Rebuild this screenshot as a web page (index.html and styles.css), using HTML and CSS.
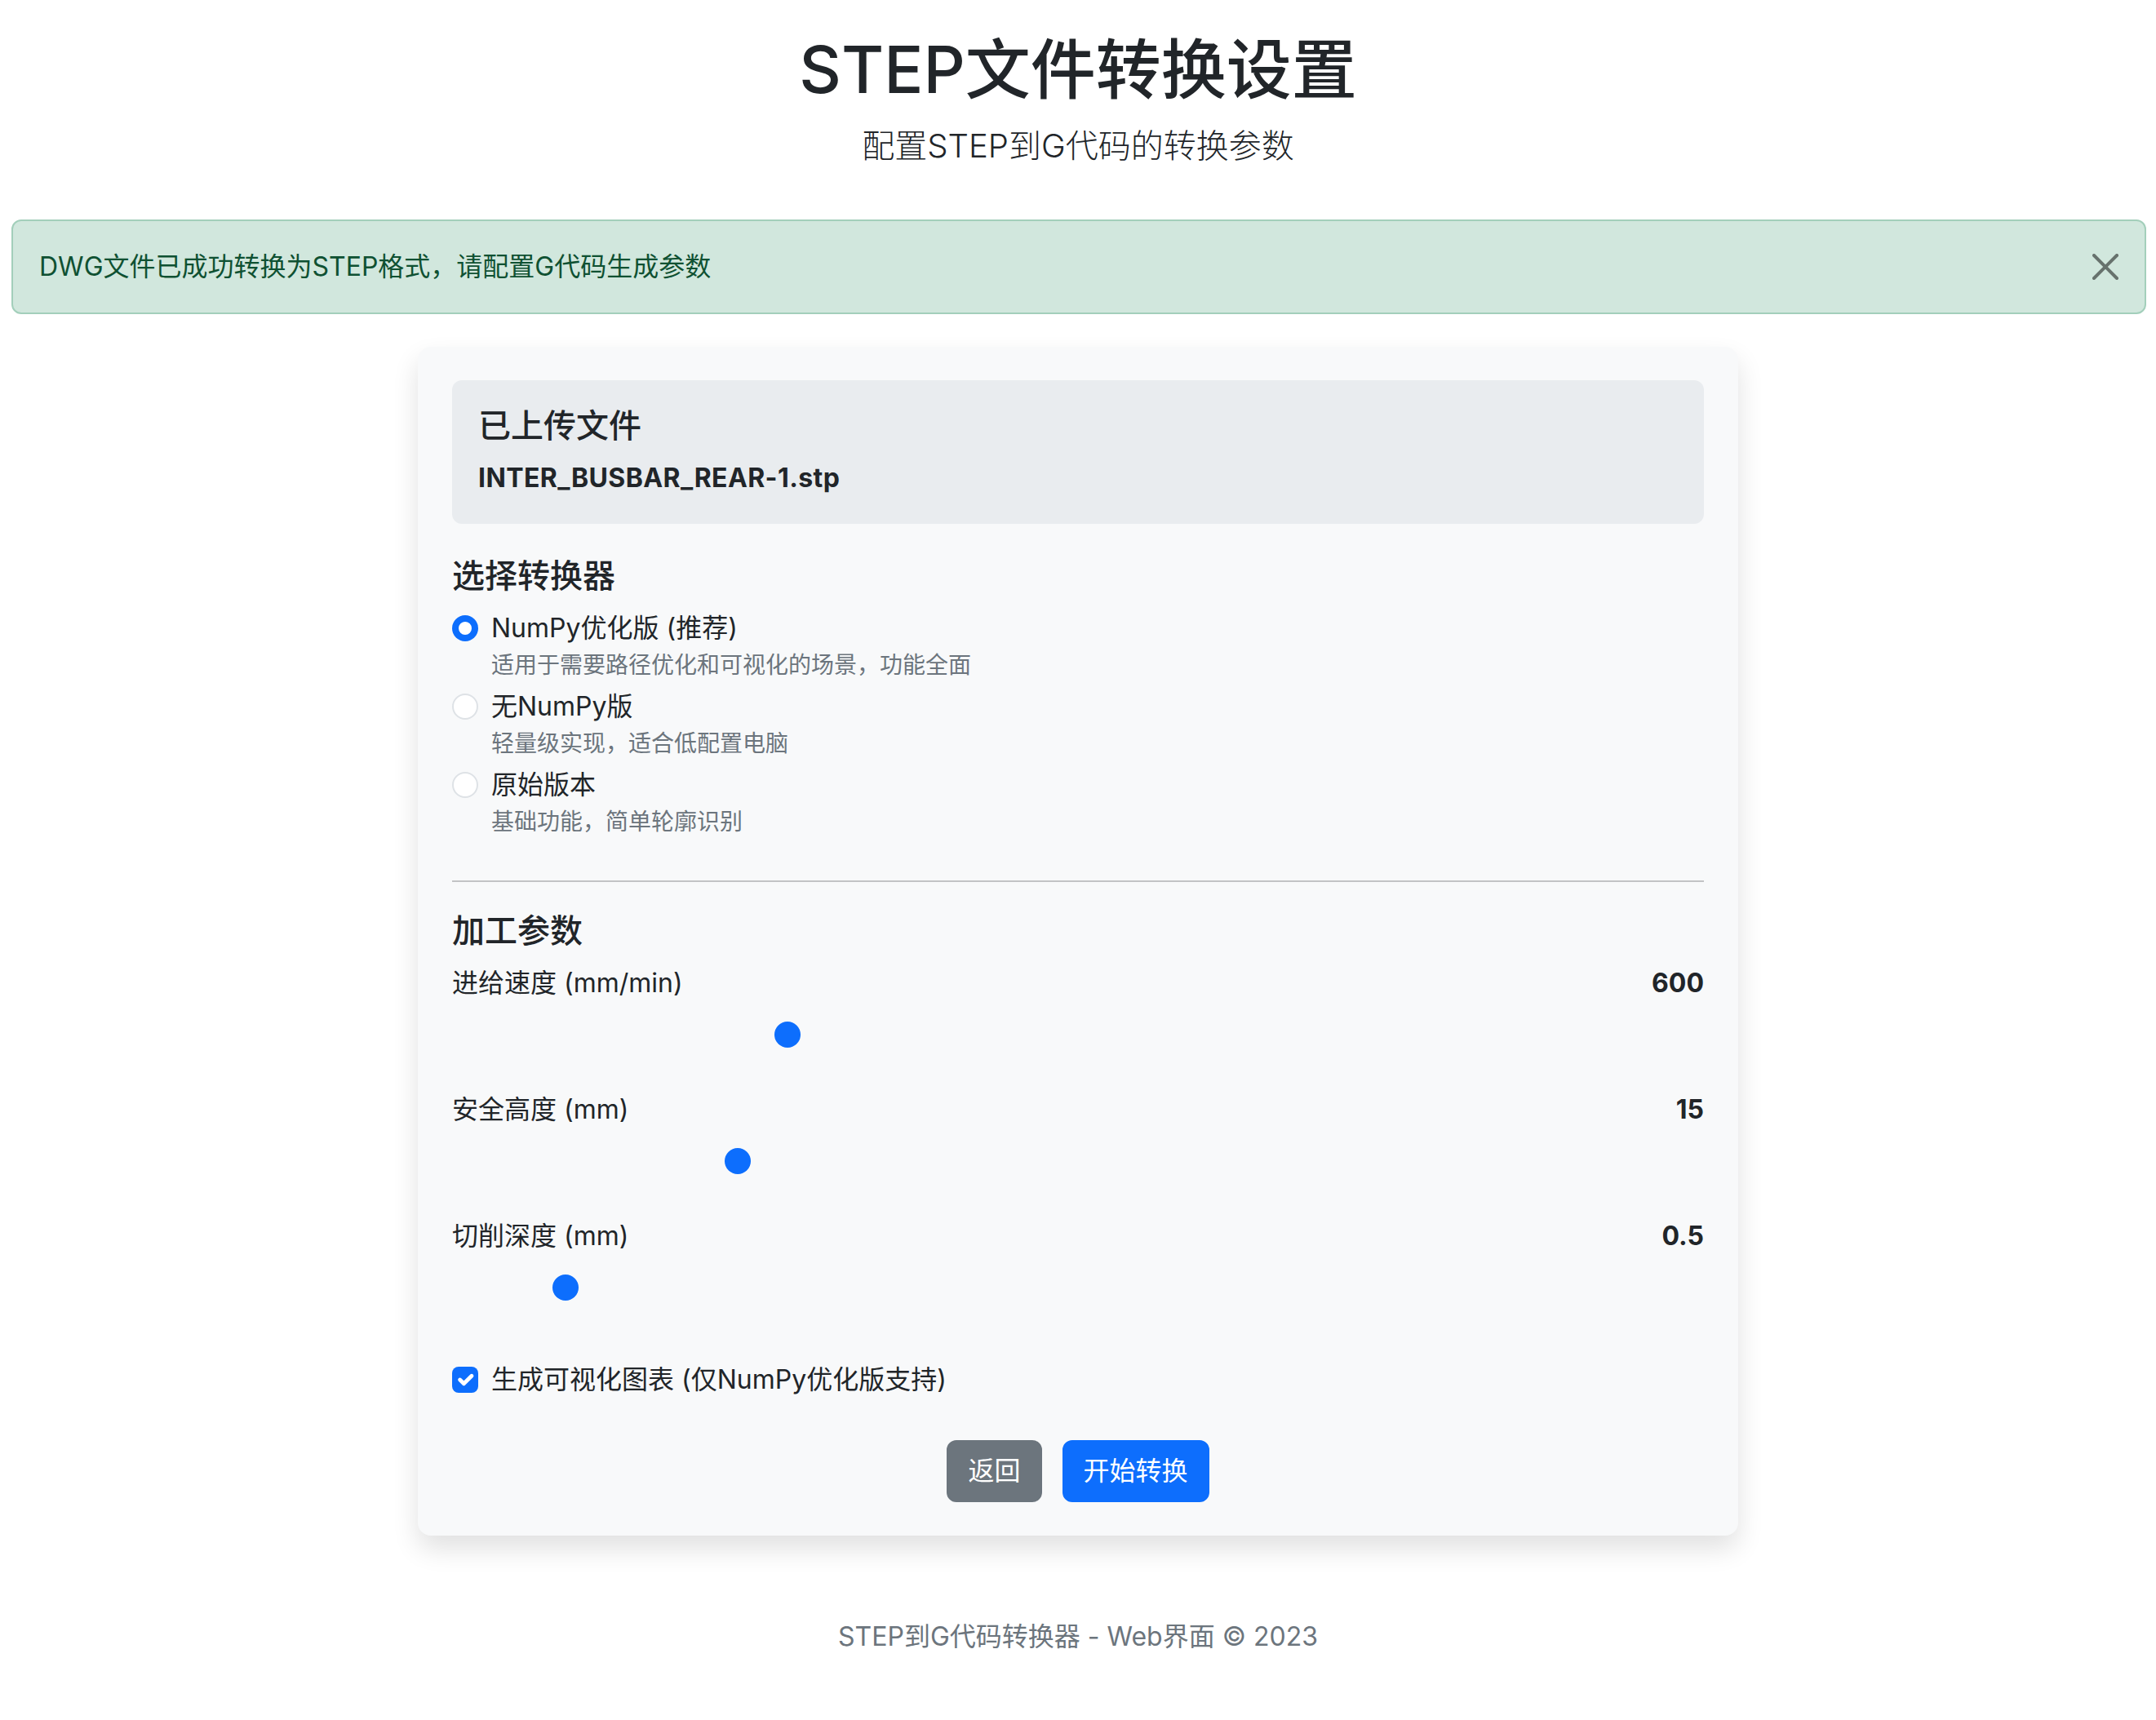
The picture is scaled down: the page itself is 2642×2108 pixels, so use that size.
FILE: index.html
```html
<!DOCTYPE html>
<html lang="zh-CN">
<head>
<meta charset="utf-8">
<title>STEP文件转换设置</title>
<link rel="stylesheet" href="styles.css">
</head>
<body>
<div class="page">
  <header class="page-header">
    <h1 class="page-title">STEP文件转换设置</h1>
    <p class="lead">配置STEP到G代码的转换参数</p>
  </header>

  <div class="alert" role="alert">
    <span class="alert-text">DWG文件已成功转换为STEP格式，请配置G代码生成参数</span>
    <button class="btn-close" type="button" aria-label="关闭">
      <svg viewBox="0 0 16 16" width="32" height="32" aria-hidden="true"><path d="M.293.293a1 1 0 0 1 1.414 0L8 6.586 14.293.293a1 1 0 1 1 1.414 1.414L9.414 8l6.293 6.293a1 1 0 0 1-1.414 1.414L8 9.414l-6.293 6.293a1 1 0 0 1-1.414-1.414L6.586 8 .293 1.707a1 1 0 0 1 0-1.414z"/></svg>
    </button>
  </div>

  <main class="card">
    <section class="file-box">
      <h5 class="file-title">已上传文件</h5>
      <p class="file-name">INTER_BUSBAR_REAR-1.stp</p>
    </section>

    <section class="converter">
      <h5 class="section-title">选择转换器</h5>
      <label class="option">
        <input class="radio" type="radio" name="converter" checked>
        <span class="option-body">
          <span class="option-label">NumPy优化版 (推荐)</span>
          <small class="option-desc">适用于需要路径优化和可视化的场景，功能全面</small>
        </span>
      </label>
      <label class="option">
        <input class="radio" type="radio" name="converter">
        <span class="option-body">
          <span class="option-label">无NumPy版</span>
          <small class="option-desc">轻量级实现，适合低配置电脑</small>
        </span>
      </label>
      <label class="option">
        <input class="radio" type="radio" name="converter">
        <span class="option-body">
          <span class="option-label">原始版本</span>
          <small class="option-desc">基础功能，简单轮廓识别</small>
        </span>
      </label>
    </section>

    <hr class="divider">

    <section class="params">
      <h5 class="section-title">加工参数</h5>
      <div class="param">
        <div class="param-head"><span>进给速度 (mm/min)</span><strong class="param-value">600</strong></div>
        <input class="range" type="range" min="100" max="2000" step="10" value="600">
      </div>
      <div class="param">
        <div class="param-head"><span>安全高度 (mm)</span><strong class="param-value">15</strong></div>
        <input class="range" type="range" min="5" max="50" step="1" value="15">
      </div>
      <div class="param">
        <div class="param-head"><span>切削深度 (mm)</span><strong class="param-value">0.5</strong></div>
        <input class="range" type="range" min="0.1" max="5" step="0.1" value="0.5">
      </div>
    </section>

    <label class="check-row">
      <span class="checkbox"><svg viewBox="0 0 20 20" width="32" height="32" aria-hidden="true"><path d="M6 10l3 3l6-6" fill="none" stroke="#fff" stroke-width="3" stroke-linecap="round" stroke-linejoin="round"/></svg></span>
      <span>生成可视化图表 (仅NumPy优化版支持)</span>
    </label>

    <div class="actions">
      <button class="btn btn-secondary" type="button">返回</button>
      <button class="btn btn-primary" type="button">开始转换</button>
    </div>
  </main>

  <footer class="footer">STEP到G代码转换器 - Web界面 © 2023</footer>
</div>
</body>
</html>
```

FILE: styles.css
```css
* {
  box-sizing: border-box;
}

html {
  font-size: 32px;
}

body {
  margin: 0;
  font-family: Inter, "Noto Sans CJK SC", sans-serif;
  font-size: 32px;
  line-height: 48px;
  color: #212529;
  background: #fff;
}

.page {
  padding-top: 37px;
  padding-bottom: 60px;
}

/* header */
.page-header {
  text-align: center;
}

.page-title {
  margin: 0 0 16px;
  font-size: 80px;
  line-height: 96px;
  font-weight: 500;
}

.lead {
  margin: 0;
  font-size: 40px;
  line-height: 60px;
  font-weight: 300;
}

/* alert */
.alert {
  display: flex;
  align-items: center;
  justify-content: space-between;
  margin: 60px 12px 40px 14px;
  padding: 32px;
  border: 2px solid #a3cfbb;
  border-radius: 12px;
  background: #d1e7dd;
  color: #0f5132;
}

.btn-close {
  display: flex;
  width: 32px;
  height: 32px;
  padding: 0;
  border: 0;
  background: transparent;
  opacity: 0.5;
  cursor: pointer;
}

.btn-close svg {
  fill: #000;
}

/* card */
.card {
  display: block;
  width: 1618px;
  margin: 0 auto;
  padding: 41px 42px 41px;
  background: #f8f9fa;
  border-radius: 16px;
  box-shadow: 0 16px 32px rgba(0, 0, 0, 0.12);
}

.file-box {
  margin-bottom: 40px;
  padding: 32px;
  background: #e9ecef;
  border-radius: 12px;
}

.file-title,
.section-title {
  margin: 0 0 16px;
  font-size: 40px;
  line-height: 48px;
  font-weight: 500;
}

.file-name {
  margin: 0;
  font-weight: 700;
  letter-spacing: 0.4px;
}

/* converter options */
.option {
  display: flex;
  align-items: flex-start;
  gap: 16px;
  margin-bottom: 6px;
  cursor: pointer;
}

.radio {
  appearance: none;
  -webkit-appearance: none;
  flex: none;
  width: 32px;
  height: 32px;
  margin: 8px 0 0;
  border: 2px solid #dee2e6;
  border-radius: 50%;
  background: #fff;
}

.radio:checked {
  border: 0;
  background: #fff;
  box-shadow: inset 0 0 0 8px #0d6efd;
}

.option-body {
  display: flex;
  flex-direction: column;
}

.option-desc {
  font-size: 28px;
  line-height: 42px;
  color: #6c757d;
}

.divider {
  margin: 51px 0 36px;
  border: 0;
  border-top: 2px solid rgba(33, 37, 41, 0.25);
}

/* params */
.param {
  margin-bottom: 44px;
}

.param-head {
  display: flex;
  justify-content: space-between;
  margin-bottom: 15px;
}

.param-value {
  font-weight: 700;
}

.range {
  -webkit-appearance: none;
  appearance: none;
  display: block;
  width: 100%;
  height: 48px;
  margin: 0;
  padding: 0;
  background: transparent;
}

.range::-webkit-slider-runnable-track {
  height: 48px;
  background: transparent;
  border: 0;
}

.range::-webkit-slider-thumb {
  -webkit-appearance: none;
  appearance: none;
  width: 32px;
  height: 32px;
  margin-top: 8px;
  border: 0;
  border-radius: 50%;
  background: #0d6efd;
}

/* checkbox */
.check-row {
  display: flex;
  align-items: center;
  gap: 16px;
  margin-top: 65px;
}

.checkbox {
  display: flex;
  width: 32px;
  height: 32px;
  border-radius: 8px;
  background: #0d6efd;
}

/* buttons */
.actions {
  display: flex;
  justify-content: center;
  gap: 25px;
  margin-top: 50px;
}

.btn {
  padding: 12px 24px;
  border: 2px solid transparent;
  border-radius: 12px;
  font-family: inherit;
  font-size: 32px;
  line-height: 48px;
  color: #fff;
  cursor: pointer;
}

.btn-secondary {
  background: #6c757d;
  border-color: #6c757d;
}

.btn-primary {
  background: #0d6efd;
  border-color: #0d6efd;
}

/* footer */
.footer {
  margin-top: 100px;
  text-align: center;
  color: #6c757d;
}
```
